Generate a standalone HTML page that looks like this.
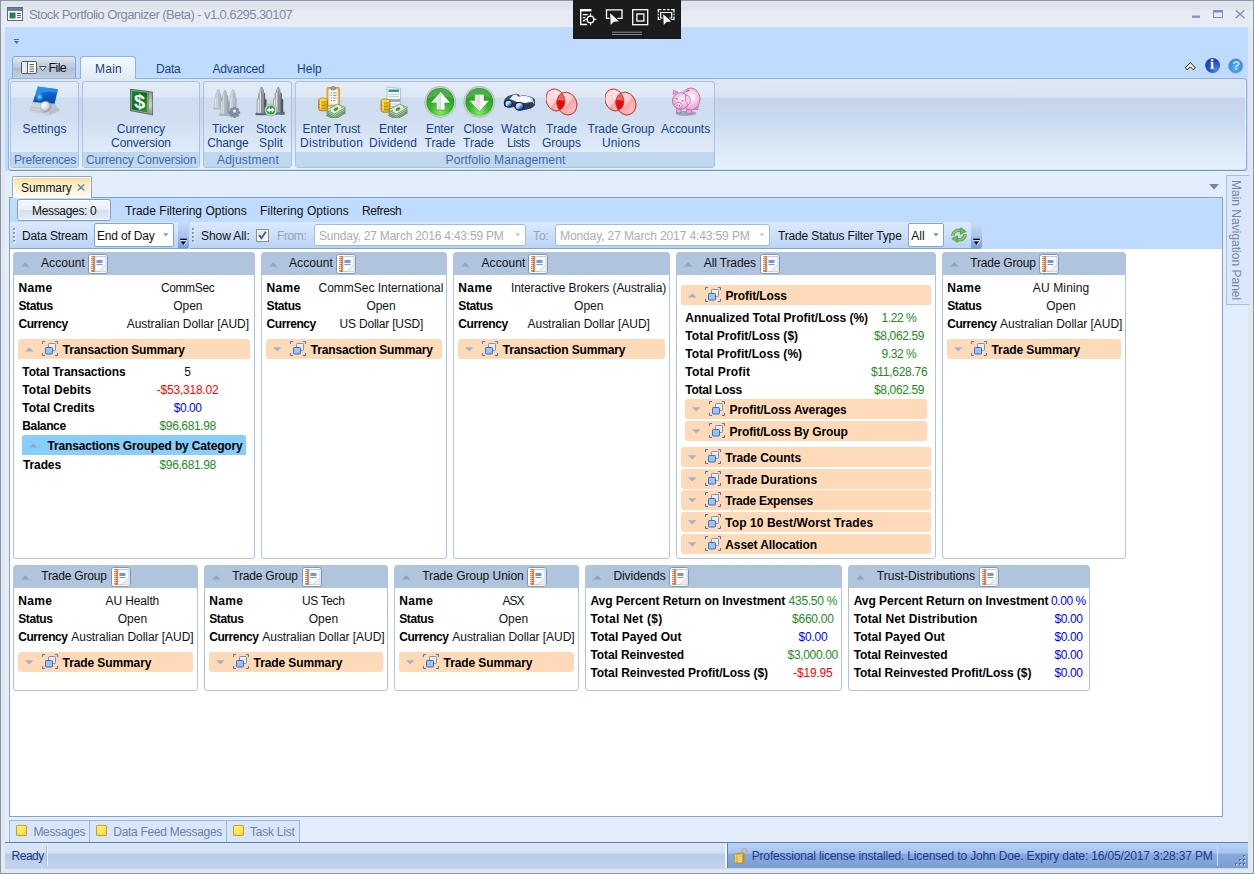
<!DOCTYPE html>
<html><head><meta charset="utf-8"><title>Stock Portfolio Organizer (Beta)</title>
<style>
html,body{margin:0;padding:0}
body{width:1254px;height:874px;overflow:hidden;position:relative;background:#e3edfb;font-family:'Liberation Sans',sans-serif;font-size:12px;line-height:16px}
div,svg,span{position:absolute;box-sizing:border-box}
span{white-space:pre;height:16px}
</style></head><body>
<div style="left:0px;top:0px;width:1254px;height:874px;background:linear-gradient(#dfe3ec 0,#e1e5ed 9px,#e8ebf3 10px,#e8ebf3 27px,#e3e7ef 28px);border:1px solid #8a97ad;"></div>
<div style="left:5px;top:27px;width:1243px;height:842px;background:#bfdbff;"></div>
<svg style="left:7px;top:7px" width="16" height="14" viewBox="0 0 16 14"><rect x="0.5" y="0.5" width="15" height="13" fill="#fff" stroke="#5a6b84"/><rect x="1" y="1" width="14" height="3" fill="#6d7f9c"/><rect x="2.5" y="5.5" width="6" height="6" fill="#2e7d4f"/><rect x="10" y="6" width="4" height="1" fill="#5a6b84"/><rect x="10" y="8" width="4" height="1" fill="#5a6b84"/><rect x="10" y="10" width="4" height="1" fill="#5a6b84"/></svg>
<div style="left:573px;top:0px;width:108px;height:39px;background:#1b1b1b;"></div>
<svg style="left:573px;top:0px" width="108" height="39" viewBox="0 0 108 39"><g fill="none" stroke="#fff" stroke-width="1.300">
<path d="M7.700 9.500v15h6.300"/><path d="M7 10.200h11.500" stroke-width="2.400"/><path d="M9.800 14.600h4.800M9.800 17.600h2.400M9.800 20.600h2.400" stroke-width="1.200"/><circle cx="17.500" cy="19.400" r="3.300"/><path d="M17.500 13.600v3.200M17.500 22v3.200M11.700 19.400h3.200M20.100 19.400h3.200" stroke-width="1.200"/>
<path d="M36.500 18.400h-3v-8.600h15.500v8.600h-4.500"/>
<rect x="59.700" y="9.700" width="15" height="15"/><rect x="63.900" y="14" width="7" height="7"/>
<path d="M85.300 12.500v-2.800h3M98 9.700h3v2.800M85.300 16.500v3h2.200M101 16.500v3h-2.800" stroke-width="1.200"/><path d="M85.300 13.800v1.500M101 13.800v1.500M90 9.700h2.500M94 9.700h2.500" stroke-width="1.200"/><path d="M89.500 18h-1.800v-5.500h11v5.500h-2.500" stroke-width="1.200"/>
</g>
<path d="M37.200 13.200l.5 11.800 3-3.300 5.300-.4z" fill="#fff"/>
<path d="M90.200 14.200l.5 10.800 2.800-3 4.800-.4z" fill="#fff"/>
<rect x="39" y="31.700" width="30" height="1" fill="#8a8a8a"/><rect x="39" y="34" width="30" height="1" fill="#8a8a8a"/></svg>
<svg style="left:1190px;top:5px" width="60" height="18" viewBox="0 0 60 18"><rect x="2" y="10.500" width="8" height="2.300" fill="#7b93bd"/><rect x="23.500" y="5.500" width="9" height="7" fill="none" stroke="#7b93bd"/><rect x="23" y="5" width="10" height="2.500" fill="#7b93bd"/><path d="M45.800 5.200l8.600 7.800M54.400 5.200l-8.600 7.800" stroke="#7b93bd" stroke-width="1.400"/></svg>
<svg style="left:13px;top:38px" width="8" height="8" viewBox="0 0 8 8"><rect x="1" y="1" width="5" height="1" fill="#4a6a9c"/><path d="M1 3h5l-2.500 3z" fill="#4a6a9c"/></svg>
<div style="left:12px;top:56px;width:64px;height:23px;border:1px solid #8ea7cc;border-bottom:none;border-radius:3px 3px 0 0;background:linear-gradient(#dfe7f1,#b9c6d8 50%,#aebdd2 51%,#c5d2e2);"></div>
<svg style="left:20px;top:60px" width="30" height="15" viewBox="0 0 30 15"><rect x="1.500" y="1.500" width="15" height="12" rx="1.500" fill="#fff" stroke="#5a5a5a"/><rect x="2" y="2" width="5" height="11" fill="#e9e9e9"/><path d="M7.500 1.500v12" stroke="#5a5a5a"/><path d="M9.500 4.500h4.500M9.500 6.800h4.500M9.500 9.100h4.500M9.500 11.400h4.500" stroke="#444" stroke-width=".9"/><path d="M19.500 6.500h6.500l-3.250 4.200z" fill="#fff" stroke="#444" stroke-width="0.9"/></svg>
<div style="left:80px;top:56px;width:56px;height:24px;border:1px solid #8db2e3;border-bottom:none;border-radius:4px 4px 0 0;background:linear-gradient(#f4f9ff,#dfeaf7);"></div>
<svg style="left:1182px;top:56px" width="70" height="20" viewBox="0 0 70 20"><defs><radialGradient id="ig" cx=".7" cy=".75" r=".8"><stop offset="0" stop-color="#4a86ea"/><stop offset=".6" stop-color="#1f4fcb"/><stop offset="1" stop-color="#1a3fb0"/></radialGradient><radialGradient id="hg" cx=".5" cy=".6" r=".6"><stop offset="0" stop-color="#5cb8f7"/><stop offset="1" stop-color="#1f82de"/></radialGradient></defs>
<path d="M3.300 11.800l5-5.300 5 5.300-2 2-3-3-3 3z" fill="#fff3c4" stroke="#222" stroke-width="1" stroke-linejoin="round"/>
<circle cx="30.600" cy="9.500" r="7.400" fill="url(#ig)"/>
<circle cx="53.700" cy="10" r="7.200" fill="url(#hg)" stroke="#9aa3ad" stroke-width=".9"/></svg>
<div style="left:8px;top:78px;width:1239px;height:93px;border:1px solid #8db2e3;border-bottom-color:#7f97b8;border-radius:4px;background:linear-gradient(#dde8f5 0,#d9e5f4 18px,#c5d6ec 19px,#c9daef 40px,#dbe8f8 68px,#e8f2fe 100%);box-shadow:inset 0 -1px 0 #bfe9f5,inset 1px 0 0 #eaf3fd,inset -1px 0 0 #eaf3fd;"></div>
<div style="left:81px;top:78px;width:54px;height:2px;background:#dfe9f6;"></div>
<div style="left:10px;top:81px;width:69px;height:87px;border:1px solid #a9c1e2;border-radius:3px;background:linear-gradient(rgba(255,255,255,.18),rgba(255,255,255,.05));"></div>
<div style="left:11px;top:152px;width:67px;height:15px;background:#c1d7f0;border-radius:0 0 2px 2px;"></div>
<div style="left:82px;top:81px;width:118px;height:87px;border:1px solid #a9c1e2;border-radius:3px;background:linear-gradient(rgba(255,255,255,.18),rgba(255,255,255,.05));"></div>
<div style="left:83px;top:152px;width:116px;height:15px;background:#c1d7f0;border-radius:0 0 2px 2px;"></div>
<div style="left:203px;top:81px;width:89px;height:87px;border:1px solid #a9c1e2;border-radius:3px;background:linear-gradient(rgba(255,255,255,.18),rgba(255,255,255,.05));"></div>
<div style="left:204px;top:152px;width:87px;height:15px;background:#c1d7f0;border-radius:0 0 2px 2px;"></div>
<div style="left:295px;top:81px;width:420px;height:87px;border:1px solid #a9c1e2;border-radius:3px;background:linear-gradient(rgba(255,255,255,.18),rgba(255,255,255,.05));"></div>
<div style="left:296px;top:152px;width:418px;height:15px;background:#c1d7f0;border-radius:0 0 2px 2px;"></div>
<svg style="left:28.5px;top:86px" width="32" height="32" viewBox="0 0 32 32"><defs><linearGradient id="sb" x1="0" y1="0" x2="0.300" y2="1"><stop offset="0" stop-color="#2a8fe6"/><stop offset=".55" stop-color="#0d63c9"/><stop offset="1" stop-color="#0a4aa8"/></linearGradient>
<radialGradient id="sg" cx=".35" cy=".35" r=".7"><stop offset="0" stop-color="#fff"/><stop offset=".6" stop-color="#d5d9e0"/><stop offset="1" stop-color="#8e97a6"/></radialGradient>
<radialGradient id="sc" cx=".5" cy=".5" r=".5"><stop offset="0" stop-color="#7ff0ff"/><stop offset="1" stop-color="#19b4f0" stop-opacity="0"/></radialGradient></defs>
<path d="M3.900 16.100L0.300 25.600 19.500 30 31.200 24.500 25.600 17.800z" fill="#b9c0cc"/><path d="M3.900 16.100L0.300 25.600 19.500 30 21 20z" fill="#cfd5de"/><path d="M2 21l18 4M1.200 23.500l18 4" stroke="#a9b1bf" stroke-width=".7"/>
<path d="M8.900 0.500L29 3.300 25.600 17.800 3.900 16.100z" fill="url(#sb)"/><path d="M5.500 11c6-5 14-6.500 21.500-3.500l2-4.200-20.100-2.800z" fill="#3aa0f0" opacity=".55"/><circle cx="10.500" cy="11" r="4.500" fill="url(#sc)"/>
<circle cx="16.500" cy="20.500" r="5.300" fill="url(#sg)" stroke="#8f98a8" stroke-width=".5"/></svg>
<svg style="left:125px;top:86px" width="32" height="32" viewBox="0 0 32 32"><defs><linearGradient id="cg" x1="0" y1="0" x2="1" y2="1"><stop offset="0" stop-color="#138a2a"/><stop offset=".5" stop-color="#0c6f1f"/><stop offset="1" stop-color="#2ea03a"/></linearGradient><linearGradient id="cs" x1="0" y1="0" x2="0" y2="1"><stop offset="0" stop-color="#8d949a"/><stop offset=".6" stop-color="#cfd3c0"/><stop offset="1" stop-color="#8a8f7a"/></linearGradient></defs>
<path d="M5 2.700L23.500 5 28 5.800V29.500L23.500 28.500 5 25z" fill="#5b6166"/><path d="M23.500 5.500L27.300 6.300V28.700L23.500 28z" fill="url(#cs)"/><path d="M6.300 4.300L22.700 6.300V27L6.300 23.800z" fill="url(#cg)" stroke="#b9d9b9" stroke-width=".6"/>
<text x="14.500" y="22" font-family="Liberation Sans,sans-serif" font-size="20" font-weight="700" fill="#fff" text-anchor="middle" transform="translate(0,-1.500) skewY(8)">$</text></svg>
<svg style="left:212px;top:86px" width="32" height="32" viewBox="0 0 32 32"><defs><clipPath id="tc1530"><path d="M6.25 3.00 L4.92 5.00 L4.92 7.00 L3.78 7.60 L3.78 11.40 L2.64 12.20 L2.64 21.00 L1.50 21.60 L1.50 23.00 L11.00 23.00 L11.00 21.60 L9.86 21.00 L9.86 12.20 L8.72 11.40 L8.72 7.60 L7.58 7.00 L7.58 5.00 L6.25 3.00z"/></clipPath></defs><g clip-path="url(#tc1530)"><rect x="1.5" y="3" width="9.5" height="20" fill="#c3ced7"/><rect x="1.5" y="3" width="3.99" height="20" fill="#e3e9ee"/><rect x="7.96" y="3" width="3.04" height="20" fill="#a9b6c1"/><path d="M4.35 8.00V21.00M6.25 5.40V21.00M7.39 8.00V21.00" stroke="#98a6b2" stroke-width=".6" opacity=".7"/><rect x="1.5" y="21.40" width="9.5" height="1.60" fill="#b4c0cb"/></g><path d="M6.25 3.00 L4.92 5.00 L4.92 7.00 L3.78 7.60 L3.78 11.40 L2.64 12.20 L2.64 21.00 L1.50 21.60 L1.50 23.00 L11.00 23.00 L11.00 21.60 L9.86 21.00 L9.86 12.20 L8.72 11.40 L8.72 7.60 L7.58 7.00 L7.58 5.00 L6.25 3.00z" fill="none" stroke="#98a6b2" stroke-width=".5" opacity=".8"/><defs><clipPath id="tc16530"><path d="M21.00 3.00 L19.74 5.10 L19.74 7.20 L18.66 7.83 L18.66 11.82 L17.58 12.66 L17.58 21.90 L16.50 22.53 L16.50 24.00 L25.50 24.00 L25.50 22.53 L24.42 21.90 L24.42 12.66 L23.34 11.82 L23.34 7.83 L22.26 7.20 L22.26 5.10 L21.00 3.00z"/></clipPath></defs><g clip-path="url(#tc16530)"><rect x="16.5" y="3" width="9" height="21" fill="#c3ced7"/><rect x="16.5" y="3" width="3.78" height="21" fill="#e3e9ee"/><rect x="22.62" y="3" width="2.88" height="21" fill="#a9b6c1"/><path d="M19.20 8.25V21.90M21.00 5.52V21.90M22.08 8.25V21.90" stroke="#98a6b2" stroke-width=".6" opacity=".7"/><rect x="16.5" y="22.32" width="9" height="1.68" fill="#b4c0cb"/></g><path d="M21.00 3.00 L19.74 5.10 L19.74 7.20 L18.66 7.83 L18.66 11.82 L17.58 12.66 L17.58 21.90 L16.50 22.53 L16.50 24.00 L25.50 24.00 L25.50 22.53 L24.42 21.90 L24.42 12.66 L23.34 11.82 L23.34 7.83 L22.26 7.20 L22.26 5.10 L21.00 3.00z" fill="none" stroke="#98a6b2" stroke-width=".5" opacity=".8"/><defs><clipPath id="tc7540"><path d="M13.00 4.00 L11.46 6.55 L11.46 9.10 L10.14 9.87 L10.14 14.71 L8.82 15.73 L8.82 26.95 L7.50 27.71 L7.50 29.50 L18.50 29.50 L18.50 27.71 L17.18 26.95 L17.18 15.73 L15.86 14.71 L15.86 9.87 L14.54 9.10 L14.54 6.55 L13.00 4.00z"/></clipPath></defs><g clip-path="url(#tc7540)"><rect x="7.5" y="4" width="11" height="25.5" fill="#b7c4ce"/><rect x="7.5" y="4" width="4.62" height="25.5" fill="#dbe3e9"/><rect x="14.98" y="4" width="3.52" height="25.5" fill="#97a6b3"/><path d="M10.80 10.38V26.95M13.00 7.06V26.95M14.32 10.38V26.95" stroke="#8797a5" stroke-width=".6" opacity=".7"/><rect x="7.5" y="27.46" width="11" height="2.04" fill="#a3b1be"/></g><path d="M13.00 4.00 L11.46 6.55 L11.46 9.10 L10.14 9.87 L10.14 14.71 L8.82 15.73 L8.82 26.95 L7.50 27.71 L7.50 29.50 L18.50 29.50 L18.50 27.71 L17.18 26.95 L17.18 15.73 L15.86 14.71 L15.86 9.87 L14.54 9.10 L14.54 6.55 L13.00 4.00z" fill="none" stroke="#8797a5" stroke-width=".5" opacity=".8"/><g transform="translate(22.500 25)"><path d="M-1-5h2l.4 1.400 1.500.7 1.300-.8 1.400 1.400-.8 1.300.7 1.500 1.400.4v2l-1.400.4-.7 1.500.8 1.300-1.400 1.400-1.300-.8-1.500.7-.4 1.400h-2l-.4-1.400-1.500-.7-1.300.8-1.400-1.400.8-1.300-.7-1.500-1.400-.4v-2l1.400-.4.7-1.500-.8-1.300 1.400-1.400 1.300.8 1.500-.7z" fill="#7f8ea4" stroke="#55647a" stroke-width=".5" transform="scale(.78)"/><circle r="1.500" fill="#f1f4f8"/></g></svg>
<svg style="left:255px;top:86px" width="32" height="32" viewBox="0 0 32 32"><defs><clipPath id="tc710"><path d="M6.70 1.00 L5.02 3.80 L5.02 6.60 L3.58 7.44 L3.58 12.76 L2.14 13.88 L2.14 26.20 L0.70 27.04 L0.70 29.00 L12.70 29.00 L12.70 27.04 L11.26 26.20 L11.26 13.88 L9.82 12.76 L9.82 7.44 L8.38 6.60 L8.38 3.80 L6.70 1.00z"/></clipPath></defs><g clip-path="url(#tc710)"><rect x="0.7" y="1" width="12" height="28" fill="#a9b2b9"/><rect x="0.7" y="1" width="5.04" height="28" fill="#eef1f3"/><rect x="8.86" y="1" width="3.84" height="28" fill="#4f5960"/><path d="M4.30 8.00V26.20M6.70 4.36V26.20M8.14 8.00V26.20" stroke="#3d464d" stroke-width=".6" opacity=".7"/><rect x="0.7" y="26.76" width="12" height="2.24" fill="#5d7183"/></g><path d="M6.70 1.00 L5.02 3.80 L5.02 6.60 L3.58 7.44 L3.58 12.76 L2.14 13.88 L2.14 26.20 L0.70 27.04 L0.70 29.00 L12.70 29.00 L12.70 27.04 L11.26 26.20 L11.26 13.88 L9.82 12.76 L9.82 7.44 L8.38 6.60 L8.38 3.80 L6.70 1.00z" fill="none" stroke="#3d464d" stroke-width=".5" opacity=".8"/><defs><clipPath id="tc17010"><path d="M23.25 1.00 L21.50 3.75 L21.50 6.50 L20.00 7.33 L20.00 12.55 L18.50 13.65 L18.50 25.75 L17.00 26.58 L17.00 28.50 L29.50 28.50 L29.50 26.58 L28.00 25.75 L28.00 13.65 L26.50 12.55 L26.50 7.33 L25.00 6.50 L25.00 3.75 L23.25 1.00z"/></clipPath></defs><g clip-path="url(#tc17010)"><rect x="17" y="1" width="12.5" height="27.5" fill="#a9b2b9"/><rect x="17" y="1" width="5.25" height="27.5" fill="#eef1f3"/><rect x="25.50" y="1" width="4.00" height="27.5" fill="#4f5960"/><path d="M20.75 7.88V25.75M23.25 4.30V25.75M24.75 7.88V25.75" stroke="#3d464d" stroke-width=".6" opacity=".7"/><rect x="17" y="26.30" width="12.5" height="2.20" fill="#5d7183"/></g><path d="M23.25 1.00 L21.50 3.75 L21.50 6.50 L20.00 7.33 L20.00 12.55 L18.50 13.65 L18.50 25.75 L17.00 26.58 L17.00 28.50 L29.50 28.50 L29.50 26.58 L28.00 25.75 L28.00 13.65 L26.50 12.55 L26.50 7.33 L25.00 6.50 L25.00 3.75 L23.25 1.00z" fill="none" stroke="#3d464d" stroke-width=".5" opacity=".8"/><circle cx="15.800" cy="24" r="6" fill="#dfe2e4" stroke="#9a9fa3" stroke-width=".8"/><circle cx="15.800" cy="24" r="4.600" fill="#2fa52a"/><path d="M11.800 24l3-2.800v1.800h2v-1.800l3 2.800-3 2.800v-1.800h-2v1.800z" fill="#fff"/></svg>
<svg style="left:315.5px;top:86px" width="32" height="32" viewBox="0 0 32 32"><rect x="11" y="1.500" width="12.500" height="18.500" rx="1.200" fill="#f0b13a" stroke="#c98a1c" stroke-width=".7"/><rect x="12.800" y="3.500" width="9" height="15" fill="#f6f7f5" stroke="#d7d9d6" stroke-width=".4"/><path d="M15 3.800v-2.300l1.200-1.200h2l1.200 1.200v2.300z" fill="#9aa1a8" stroke="#6f767d" stroke-width=".5"/><path d="M14.500 7h1.500M17 7h3.500M14.500 9.500h1.500M17 9.500h3.500M14.500 12h1.500M17 12h3.500M14.500 14.500h1.500M17 14.500h2.500" stroke="#7f868e" stroke-width=".8"/><g stroke="#96690a" stroke-width=".6"><path d="M2.5 14v9a4.500 2 0 0 0 9 0v-9z" fill="#eab414"/><ellipse cx="7.0" cy="14" rx="4.500" ry="2" fill="#ffdb3a"/></g><path d="M2.5 17.42a4.500 2 0 0 0 9 0M2.5 20.48a4.500 2 0 0 0 9 0" fill="none" stroke="#96690a" stroke-width=".6"/><path d="M4.7 14v9" stroke="#fbe58c" stroke-width="1.500" opacity=".8"/><path d="M10.5 29.5L21.5 23.5L29.5 27.0L18.5 33.5z" fill="#86ad80" stroke="#42703c" stroke-width=".6"/><path d="M10.5 27.7L21.5 21.7L29.5 25.2L18.5 31.7z" fill="#a2c79c" stroke="#42703c" stroke-width=".6"/><path d="M10.5 25.9L21.5 19.9L29.5 23.4L18.5 29.9z" fill="#bcdcb6" stroke="#42703c" stroke-width=".6"/><path d="M10.5 24.1L21.5 18.1L29.5 21.6L18.5 28.1z" fill="#d9eed4" stroke="#42703c" stroke-width=".6"/><ellipse cx="20.0" cy="23.1" rx="2.500" ry="1.600" fill="#4f8a46" transform="rotate(-25 20.0 23.1)"/><path d="M13.5 24.3l1.500.800M25.0 20.6l1.500.800" stroke="#4f8a46" stroke-width=".9"/></svg>
<svg style="left:377px;top:86px" width="32" height="32" viewBox="0 0 32 32"><path d="M10 1l13.500 1.500v18h-13.500z" fill="#eef4f8" stroke="#9fb4c4" stroke-width=".7"/><rect x="11.500" y="3.500" width="10.500" height="2.500" fill="#2f9a8a"/><path d="M11.500 8.500h10.500M11.500 10.500h10.500" stroke="#b9c7d2" stroke-width=".8"/><path d="M12 13v3M14 13v3M16 13v3M18 13v3M20 13v3M22 13v3" stroke="#5c6f80" stroke-width="1.100"/><path d="M11.500 18h10.500" stroke="#b9c7d2" stroke-width=".8"/><g stroke="#96690a" stroke-width=".6"><path d="M4 15v9.5a4.500 2 0 0 0 9 0v-9.5z" fill="#eab414"/><ellipse cx="8.5" cy="15" rx="4.500" ry="2" fill="#ffdb3a"/></g><path d="M4 18.61a4.500 2 0 0 0 9 0M4 21.84a4.500 2 0 0 0 9 0" fill="none" stroke="#96690a" stroke-width=".6"/><path d="M6.2 15v9.5" stroke="#fbe58c" stroke-width="1.500" opacity=".8"/><path d="M11.5 29.5L22.5 23.5L30.5 27.0L19.5 33.5z" fill="#86ad80" stroke="#42703c" stroke-width=".6"/><path d="M11.5 27.7L22.5 21.7L30.5 25.2L19.5 31.7z" fill="#a2c79c" stroke="#42703c" stroke-width=".6"/><path d="M11.5 25.9L22.5 19.9L30.5 23.4L19.5 29.9z" fill="#bcdcb6" stroke="#42703c" stroke-width=".6"/><path d="M11.5 24.1L22.5 18.1L30.5 21.6L19.5 28.1z" fill="#d9eed4" stroke="#42703c" stroke-width=".6"/><ellipse cx="21.0" cy="23.1" rx="2.500" ry="1.600" fill="#4f8a46" transform="rotate(-25 21.0 23.1)"/><path d="M14.5 24.3l1.500.800M26.0 20.6l1.500.800" stroke="#4f8a46" stroke-width=".9"/></svg>
<svg style="left:424px;top:86px" width="32" height="32" viewBox="0 0 32 32"><defs><radialGradient id="bg1" cx=".5" cy=".85" r=".75"><stop offset="0" stop-color="#8aea62"/><stop offset=".45" stop-color="#3aba2b"/><stop offset="1" stop-color="#1f9a1c"/></radialGradient><linearGradient id="ba1" x1="0" y1="0" x2="1" y2="0"><stop offset="0" stop-color="#fff"/><stop offset=".5" stop-color="#d9dddc"/><stop offset=".55" stop-color="#f4f6f5"/><stop offset="1" stop-color="#fff"/></linearGradient></defs>
<circle cx="16.300" cy="15.900" r="15.600" fill="#c9cfd0" stroke="#aab1b3" stroke-width=".6"/><circle cx="16.300" cy="15.900" r="13.900" fill="url(#bg1)"/><path d="M3.500 13a13 13 0 0 1 25.600 0c-5-4.500-20-4.500-25.600 0z" fill="#fff" opacity=".18"/><path d="M16.500 5.400l10 11.500h-5.600v7.100h-8.600v-7.100h-5.600z" fill="url(#ba1)" stroke="#2c8a2a" stroke-width=".5"/></svg>
<svg style="left:462.5px;top:86px" width="32" height="32" viewBox="0 0 32 32"><defs><radialGradient id="bg0" cx=".5" cy=".85" r=".75"><stop offset="0" stop-color="#8aea62"/><stop offset=".45" stop-color="#3aba2b"/><stop offset="1" stop-color="#1f9a1c"/></radialGradient><linearGradient id="ba0" x1="0" y1="0" x2="1" y2="0"><stop offset="0" stop-color="#fff"/><stop offset=".5" stop-color="#d9dddc"/><stop offset=".55" stop-color="#f4f6f5"/><stop offset="1" stop-color="#fff"/></linearGradient></defs>
<circle cx="16.300" cy="15.900" r="15.600" fill="#c9cfd0" stroke="#aab1b3" stroke-width=".6"/><circle cx="16.300" cy="15.900" r="13.900" fill="url(#bg0)"/><path d="M3.500 13a13 13 0 0 1 25.600 0c-5-4.500-20-4.500-25.600 0z" fill="#fff" opacity=".18"/><path d="M16.400 26l-10.200-11.600h5.400v-6.200h9.400v6.200h5.400z" fill="url(#ba0)" stroke="#2c8a2a" stroke-width=".5"/></svg>
<svg style="left:502.5px;top:86px" width="32" height="32" viewBox="0 0 32 32"><defs><linearGradient id="ln" x1="0" y1="0" x2="1" y2="1"><stop offset="0" stop-color="#f4faff"/><stop offset=".45" stop-color="#a9d8fb"/><stop offset=".7" stop-color="#2f74e6"/><stop offset="1" stop-color="#1a3fb8"/></linearGradient><linearGradient id="bb" x1="0" y1="0" x2="0" y2="1"><stop offset="0" stop-color="#3f587c"/><stop offset="1" stop-color="#22344f"/></linearGradient></defs>
<path d="M0.800 17C0.800 13 4 10 8 9L12.500 7.800C14.500 7.600 16 8.500 17 10L20.500 9 27 10.500C31 11.500 33 14 32.500 17.500 32 20.500 29.500 22 26.500 22.800L19 24.600C15 25.200 12 23.200 11.500 20.700L9.500 21.200C5 22.700 0.800 20.500 0.800 17z" fill="url(#bb)"/>
<path d="M6.500 13L10 9.300 13 8.300 15.500 10.800 20.500 9.600 27 11 29.300 15.800 22 17 14 16 9.500 14z" fill="#eef1f4"/><path d="M14.500 12.500L21 11l6 1.500 1.500 3-6.500 1z" fill="#fff"/><path d="M27 10.800l2.200.9 2.300 6.300-2.200-2z" fill="#d5dbe2"/>
<path d="M22.500 17.500l1.500 6M26 16.800l1.500 5.500" stroke="#1f2f48" stroke-width="1" opacity=".6"/>
<ellipse cx="5.300" cy="17.800" rx="4.200" ry="3.800" fill="#0d1422"/><ellipse cx="5.600" cy="17.700" rx="3.200" ry="2.900" fill="url(#ln)"/>
<ellipse cx="16.100" cy="20.300" rx="4.700" ry="4.200" fill="#0d1422"/><ellipse cx="16.400" cy="20.200" rx="3.600" ry="3.200" fill="url(#ln)"/></svg>
<svg style="left:545.5px;top:86px" width="32" height="32" viewBox="0 0 32 32"><defs><linearGradient id="vp1" x1="0.250" y1="0" x2=".75" y2="1"><stop offset="0" stop-color="#fdeaea"/><stop offset=".52" stop-color="#fbcaca"/><stop offset=".55" stop-color="#f7a6a6"/><stop offset="1" stop-color="#fbc4c4"/></linearGradient><clipPath id="vc1"><ellipse cx="9.400" cy="14" rx="9.300" ry="11.200" transform="rotate(-22 9.400 14)"/></clipPath></defs>
<ellipse cx="9.400" cy="14" rx="9.300" ry="11.200" transform="rotate(-22 9.400 14)" fill="url(#vp1)" stroke="#cf3a3a" stroke-width=".7"/>
<ellipse cx="20.900" cy="17.600" rx="9.800" ry="11.600" transform="rotate(-22 20.900 17.600)" fill="url(#vp1)" stroke="#cf3a3a" stroke-width=".7"/>
<g clip-path="url(#vc1)"><ellipse cx="20.900" cy="17.600" rx="9.800" ry="11.600" transform="rotate(-22 20.900 17.600)" fill="#e00b0b"/><path d="M8 2h16v13.200l-16-1.500z" fill="#fff" opacity=".36"/></g>
<ellipse cx="9.400" cy="14" rx="9.300" ry="11.200" transform="rotate(-22 9.400 14)" fill="none" stroke="#cf3a3a" stroke-width=".7"/><ellipse cx="20.900" cy="17.600" rx="9.800" ry="11.600" transform="rotate(-22 20.900 17.600)" fill="none" stroke="#cf3a3a" stroke-width=".7"/></svg>
<svg style="left:605px;top:86px" width="32" height="32" viewBox="0 0 32 32"><defs><linearGradient id="vp2" x1="0.250" y1="0" x2=".75" y2="1"><stop offset="0" stop-color="#fdeaea"/><stop offset=".52" stop-color="#fbcaca"/><stop offset=".55" stop-color="#f7a6a6"/><stop offset="1" stop-color="#fbc4c4"/></linearGradient><clipPath id="vc2"><ellipse cx="9.400" cy="14" rx="9.300" ry="11.200" transform="rotate(-22 9.400 14)"/></clipPath></defs>
<ellipse cx="9.400" cy="14" rx="9.300" ry="11.200" transform="rotate(-22 9.400 14)" fill="url(#vp2)" stroke="#cf3a3a" stroke-width=".7"/>
<ellipse cx="20.900" cy="17.600" rx="9.800" ry="11.600" transform="rotate(-22 20.900 17.600)" fill="url(#vp2)" stroke="#cf3a3a" stroke-width=".7"/>
<g clip-path="url(#vc2)"><ellipse cx="20.900" cy="17.600" rx="9.800" ry="11.600" transform="rotate(-22 20.900 17.600)" fill="#e00b0b"/><path d="M8 2h16v13.200l-16-1.500z" fill="#fff" opacity=".36"/></g>
<ellipse cx="9.400" cy="14" rx="9.300" ry="11.200" transform="rotate(-22 9.400 14)" fill="none" stroke="#cf3a3a" stroke-width=".7"/><ellipse cx="20.900" cy="17.600" rx="9.800" ry="11.600" transform="rotate(-22 20.900 17.600)" fill="none" stroke="#cf3a3a" stroke-width=".7"/></svg>
<svg style="left:669.5px;top:86px" width="32" height="32" viewBox="0 0 32 32"><defs><radialGradient id="pg" cx=".55" cy=".4" r=".65"><stop offset="0" stop-color="#fff"/><stop offset=".45" stop-color="#f3cde9"/><stop offset="1" stop-color="#dd9bcd"/></radialGradient></defs>
<ellipse cx="16" cy="27.300" rx="10.500" ry="2.600" fill="#6f8088" opacity=".55"/>
<path d="M6.500 21.500h4.500v5.200h-4.500zM16.500 22h5v5.500h-5zM23.500 18h4.500v5.500h-4.500z" fill="#e6a6d6" stroke="#c060a8" stroke-width=".7"/>
<ellipse cx="20.700" cy="13" rx="9.300" ry="11" fill="url(#pg)" stroke="#c060a8" stroke-width=".8"/>
<path d="M3 8.500l.5-4 4.500 1.500z" fill="#eab5dc" stroke="#c060a8" stroke-width=".7"/>
<circle cx="10.700" cy="15" r="8.300" fill="url(#pg)" stroke="#c060a8" stroke-width=".8"/>
<path d="M15.500 9.500c2.500-.5 4.500 1 4.800 4 .2 2-.5 4-1.800 5-1.500-1-2.500-2.500-3-4.500z" fill="#f6d6ee" stroke="#c060a8" stroke-width=".7"/>
<ellipse cx="8.400" cy="19.200" rx="3.700" ry="2.900" fill="#f8dff2" stroke="#c060a8" stroke-width=".7"/><ellipse cx="7.100" cy="19.200" rx=".55" ry=".9" fill="#a0408c"/><ellipse cx="9.400" cy="19.700" rx=".55" ry=".9" fill="#a0408c"/>
<path d="M5.800 12.500l2 .8M11.500 14.300l2 .8" stroke="#b050a0" stroke-width="1.100"/><path d="M16.300 5.500l3-1.500" stroke="#b050a0" stroke-width="1.300"/></svg>
<div style="left:5px;top:171px;width:1243px;height:649px;background:#e3eefd;"></div>
<div style="left:9px;top:197px;width:1214px;height:620px;border:1px solid #86a2cc;background:#fff;"></div>
<div style="left:12px;top:176px;width:80px;height:22px;border:1px solid #8fa6c8;box-shadow:inset 1px 1px 0 #fff,inset -1px 0 0 #fff;border-bottom:none;border-radius:2px 2px 0 0;background:linear-gradient(#fbdc98,#fdeec9 40%,#fffdf6);"></div>
<svg style="left:76px;top:183px" width="10" height="9" viewBox="0 0 10 9"><path d="M1.800 1.500l6.500 6M8.300 1.500l-6.500 6" stroke="#6d84ab" stroke-width="1.600"/></svg>
<svg style="left:1208px;top:183px" width="12" height="8" viewBox="0 0 12 8"><path d="M1 1h10l-5 5.500z" fill="#6c86ac"/></svg>
<div style="left:1226px;top:175px;width:23px;height:130px;border:1px solid #a6bedf;border-right:none;background:#dce8f9;"></div>
<div style="left:10px;top:198px;width:1212px;height:24px;background:#bfdbff;"></div>
<div style="left:17px;top:199px;width:94px;height:22px;border:1px solid #7f9cc6;border-radius:3px;box-shadow:inset 0 0 0 1px #fff;background:linear-gradient(#f2f6fd,#e9f0fb 50%,#d3dfee 51%,#e5edf8);"></div>
<div style="left:10px;top:222px;width:1212px;height:27px;background:#bfdbff;"></div>
<div style="left:10px;top:222px;width:168px;height:27px;background:linear-gradient(#dbe9fd 0,#cfe1fb 40%,#c3d9f8 75%,#bbd3f5 100%);border-bottom:1px solid #7da5de;"></div>
<div style="left:178px;top:222px;width:11px;height:27px;background:linear-gradient(#c9dcf8,#a9c4ee 50%,#6f9be0);border-radius:0 3px 3px 0;"></div>
<div style="left:190px;top:222px;width:781px;height:27px;background:linear-gradient(#dbe9fd 0,#cfe1fb 40%,#c3d9f8 75%,#bbd3f5 100%);border-bottom:1px solid #7da5de;"></div>
<div style="left:971px;top:222px;width:11px;height:27px;background:linear-gradient(#c9dcf8,#a9c4ee 50%,#6f9be0);border-radius:0 3px 3px 0;"></div>
<svg style="left:13px;top:228px" width="4" height="16" viewBox="0 0 4 16"><rect x="0" y="0" width="2" height="2" fill="#6f95d3"/><rect x="1" y="1" width="2" height="2" fill="#f4f8fe"/><rect x="1" y="1" width="1" height="1" fill="#9dbbe8"/><rect x="0" y="4" width="2" height="2" fill="#6f95d3"/><rect x="1" y="5" width="2" height="2" fill="#f4f8fe"/><rect x="1" y="5" width="1" height="1" fill="#9dbbe8"/><rect x="0" y="8" width="2" height="2" fill="#6f95d3"/><rect x="1" y="9" width="2" height="2" fill="#f4f8fe"/><rect x="1" y="9" width="1" height="1" fill="#9dbbe8"/><rect x="0" y="12" width="2" height="2" fill="#6f95d3"/><rect x="1" y="13" width="2" height="2" fill="#f4f8fe"/><rect x="1" y="13" width="1" height="1" fill="#9dbbe8"/></svg>
<svg style="left:192px;top:228px" width="4" height="16" viewBox="0 0 4 16"><rect x="0" y="0" width="2" height="2" fill="#6f95d3"/><rect x="1" y="1" width="2" height="2" fill="#f4f8fe"/><rect x="1" y="1" width="1" height="1" fill="#9dbbe8"/><rect x="0" y="4" width="2" height="2" fill="#6f95d3"/><rect x="1" y="5" width="2" height="2" fill="#f4f8fe"/><rect x="1" y="5" width="1" height="1" fill="#9dbbe8"/><rect x="0" y="8" width="2" height="2" fill="#6f95d3"/><rect x="1" y="9" width="2" height="2" fill="#f4f8fe"/><rect x="1" y="9" width="1" height="1" fill="#9dbbe8"/><rect x="0" y="12" width="2" height="2" fill="#6f95d3"/><rect x="1" y="13" width="2" height="2" fill="#f4f8fe"/><rect x="1" y="13" width="1" height="1" fill="#9dbbe8"/></svg>
<svg style="left:180px;top:238px" width="8" height="8" viewBox="0 0 8 8"><rect x="0.300" y="0.700" width="6.400" height="1.500" fill="#000"/><rect x="0.300" y="2.200" width="6.400" height="1" fill="#fff" opacity=".9"/><path d="M0.800 3.600h5.400l-2.700 3.400z" fill="#000"/><path d="M6.200 3.600l-2.700 3.400.6.500 2.900-3.700z" fill="#fff" opacity=".8"/></svg>
<svg style="left:973px;top:238px" width="8" height="8" viewBox="0 0 8 8"><rect x="0.300" y="0.700" width="6.400" height="1.500" fill="#000"/><rect x="0.300" y="2.200" width="6.400" height="1" fill="#fff" opacity=".9"/><path d="M0.800 3.600h5.400l-2.700 3.400z" fill="#000"/><path d="M6.200 3.600l-2.700 3.400.6.500 2.900-3.700z" fill="#fff" opacity=".8"/></svg>
<div style="left:94px;top:223px;width:80px;height:24px;border:1px solid #7ea4dd;border-radius:2px;background:#fff;"></div>
<svg style="left:163px;top:233px" width="6" height="4" viewBox="0 0 6 4"><path d="M0.300 0.200h5l-2.500 3.200z" fill="#7b96c0"/></svg>
<div style="left:256px;top:229px;width:13px;height:13px;border:1px solid #8e8f8f;background:linear-gradient(135deg,#d9dde3,#fff);box-shadow:inset 0 0 0 1px #f4f4f4;"></div>
<svg style="left:257px;top:230px" width="11" height="11" viewBox="0 0 11 11"><path d="M2.200 5.200l2.300 3 4.300-6.500" fill="none" stroke="#4a5f97" stroke-width="1.900"/></svg>
<div style="left:314px;top:224px;width:212px;height:22px;border:1px solid #9cbbe6;border-radius:3px;background:#fff;"></div>
<svg style="left:515px;top:233px" width="6" height="4" viewBox="0 0 6 4"><path d="M0.300 0.200h5l-2.500 3.200z" fill="#c3cad6"/></svg>
<div style="left:555px;top:224px;width:215px;height:22px;border:1px solid #9cbbe6;border-radius:3px;background:#fff;"></div>
<svg style="left:759px;top:233px" width="6" height="4" viewBox="0 0 6 4"><path d="M0.300 0.200h5l-2.500 3.200z" fill="#c3cad6"/></svg>
<div style="left:908px;top:223px;width:36px;height:24px;border:1px solid #7ea4dd;border-radius:2px;background:#fff;"></div>
<svg style="left:933px;top:233px" width="6" height="4" viewBox="0 0 6 4"><path d="M0.300 0.200h5.400l-2.700 3.200z" fill="#6f8fc4"/></svg>
<svg style="left:950px;top:226px" width="18" height="18" viewBox="0 0 18 18"><g fill="none" stroke-linecap="butt"><path d="M2.800 10C3 5.500 7 3.300 11.500 4.800" stroke="#4e9a36" stroke-width="3.400"/><path d="M2.800 10C3 5.500 7 3.300 11.500 4.800" stroke="#86cc66" stroke-width="1.900"/><path d="M15.200 8.200C15 12.700 11 14.900 6.500 13.400" stroke="#4e9a36" stroke-width="3.400"/><path d="M15.200 8.200C15 12.700 11 14.900 6.500 13.400" stroke="#86cc66" stroke-width="1.900"/></g><path d="M10.800 1.600l5.400 4-5.900 2.800z" fill="#6fbd4e" stroke="#4e9a36" stroke-width=".7"/><path d="M7.200 16.600l-5.400-4 5.900-2.800z" fill="#6fbd4e" stroke="#4e9a36" stroke-width=".7"/></svg>
<div style="left:13px;top:252px;width:242px;height:307px;border:1px solid #afc3e0;border-radius:4px 4px 3px 3px;background:#fff;"></div>
<div style="left:13px;top:252px;width:242px;height:23px;background:#b0c4de;border-radius:4px 4px 0 0;"></div>
<svg style="left:20.5px;top:261.5px" width="9" height="5" viewBox="0 0 9 5"><path d="M0 4.500l4.250-4.300 4.250 4.300z" fill="#8fa3c4"/></svg>
<svg style="left:88px;top:254px" width="20" height="20" viewBox="0 0 20 20"><rect x="0.5" y="0.5" width="19" height="19" rx="2.200" fill="#fff" stroke="#7a97c4"/><rect x="7" y="2.500" width="11" height="15" fill="#fdfdfe" stroke="#c3c9d2" stroke-width="1"/><rect x="3" y="2" width="3.500" height="16" rx="1" fill="#dc8c52"/><rect x="5" y="2" width="1.500" height="16" fill="#c9652c"/><path d="M2.500 3.500h3M2.500 5.500h3M2.500 7.500h3M2.500 9.500h3M2.500 11.500h3M2.500 13.500h3M2.500 15.500h3" stroke="#f6e9e0" stroke-width="1"/><rect x="8.500" y="6" width="6" height="3" fill="#6f97e0"/><rect x="8.500" y="10" width="6" height="1" fill="#6f97e0"/><path d="M11 17.500l6.500-6.500v6.500z" fill="#eceef2"/><path d="M11 17.500l6.500-6.500" stroke="#c9cdd4" stroke-width="1"/></svg>
<div style="left:18px;top:339px;width:232px;height:20px;background:#ffdab9;border-radius:3px 3px 0 0;"></div>
<svg style="left:24.5px;top:346.7px" width="9" height="5" viewBox="0 0 9 5"><path d="M0 4.500l4.250-4.300 4.250 4.300z" fill="#a3b2c8"/></svg>
<svg style="left:42px;top:341px" width="16" height="16" viewBox="0 0 16 16"><path d="M0.500 3v-2.500h2.500M13 0.500h2.500v2.500M0.500 12v2.500h2.500M15.500 12v2.500h-2.500" fill="none" stroke="#3560ae" stroke-width="1" opacity=".85"/><rect x="6.500" y="2.500" width="7" height="7" rx="0.800" fill="#e9eef6" stroke="#8a8f98" stroke-width="1"/><rect x="3.500" y="6.500" width="7" height="6.500" rx="0.800" fill="#9cc4f3" stroke="#3a6cc0" stroke-width="1"/></svg>
<div style="left:22px;top:435px;width:224px;height:20px;background:#87cefa;border-radius:3px 3px 0 0;"></div>
<svg style="left:28.5px;top:442.7px" width="9" height="5" viewBox="0 0 9 5"><path d="M0 4.500l4.250-4.300 4.250 4.300z" fill="#94a6c8"/></svg>
<div style="left:261px;top:252px;width:186px;height:307px;border:1px solid #afc3e0;border-radius:4px 4px 3px 3px;background:#fff;"></div>
<div style="left:261px;top:252px;width:186px;height:23px;background:#b0c4de;border-radius:4px 4px 0 0;"></div>
<svg style="left:268.5px;top:261.5px" width="9" height="5" viewBox="0 0 9 5"><path d="M0 4.500l4.250-4.300 4.250 4.300z" fill="#8fa3c4"/></svg>
<svg style="left:336px;top:254px" width="20" height="20" viewBox="0 0 20 20"><rect x="0.5" y="0.5" width="19" height="19" rx="2.200" fill="#fff" stroke="#7a97c4"/><rect x="7" y="2.500" width="11" height="15" fill="#fdfdfe" stroke="#c3c9d2" stroke-width="1"/><rect x="3" y="2" width="3.500" height="16" rx="1" fill="#dc8c52"/><rect x="5" y="2" width="1.500" height="16" fill="#c9652c"/><path d="M2.500 3.500h3M2.500 5.500h3M2.500 7.500h3M2.500 9.500h3M2.500 11.500h3M2.500 13.500h3M2.500 15.500h3" stroke="#f6e9e0" stroke-width="1"/><rect x="8.500" y="6" width="6" height="3" fill="#6f97e0"/><rect x="8.500" y="10" width="6" height="1" fill="#6f97e0"/><path d="M11 17.500l6.500-6.500v6.500z" fill="#eceef2"/><path d="M11 17.500l6.500-6.500" stroke="#c9cdd4" stroke-width="1"/></svg>
<div style="left:266px;top:339px;width:176px;height:20px;background:#ffdab9;border-radius:3px;"></div>
<svg style="left:272.5px;top:347px" width="9" height="5" viewBox="0 0 9 5"><path d="M0 0.300h8.500l-4.250 4.300z" fill="#a3b2c8"/></svg>
<svg style="left:290px;top:341px" width="16" height="16" viewBox="0 0 16 16"><path d="M0.500 3v-2.500h2.500M13 0.500h2.500v2.500M0.500 12v2.500h2.500M15.500 12v2.500h-2.500" fill="none" stroke="#3560ae" stroke-width="1" opacity=".85"/><rect x="6.500" y="2.500" width="7" height="7" rx="0.800" fill="#e9eef6" stroke="#8a8f98" stroke-width="1"/><rect x="3.500" y="6.500" width="7" height="6.500" rx="0.800" fill="#9cc4f3" stroke="#3a6cc0" stroke-width="1"/></svg>
<div style="left:453px;top:252px;width:217px;height:307px;border:1px solid #afc3e0;border-radius:4px 4px 3px 3px;background:#fff;"></div>
<div style="left:453px;top:252px;width:217px;height:23px;background:#b0c4de;border-radius:4px 4px 0 0;"></div>
<svg style="left:460.5px;top:261.5px" width="9" height="5" viewBox="0 0 9 5"><path d="M0 4.500l4.250-4.300 4.250 4.300z" fill="#8fa3c4"/></svg>
<svg style="left:528px;top:254px" width="20" height="20" viewBox="0 0 20 20"><rect x="0.5" y="0.5" width="19" height="19" rx="2.200" fill="#fff" stroke="#7a97c4"/><rect x="7" y="2.500" width="11" height="15" fill="#fdfdfe" stroke="#c3c9d2" stroke-width="1"/><rect x="3" y="2" width="3.500" height="16" rx="1" fill="#dc8c52"/><rect x="5" y="2" width="1.500" height="16" fill="#c9652c"/><path d="M2.500 3.500h3M2.500 5.500h3M2.500 7.500h3M2.500 9.500h3M2.500 11.500h3M2.500 13.500h3M2.500 15.500h3" stroke="#f6e9e0" stroke-width="1"/><rect x="8.500" y="6" width="6" height="3" fill="#6f97e0"/><rect x="8.500" y="10" width="6" height="1" fill="#6f97e0"/><path d="M11 17.500l6.500-6.500v6.500z" fill="#eceef2"/><path d="M11 17.500l6.500-6.500" stroke="#c9cdd4" stroke-width="1"/></svg>
<div style="left:458px;top:339px;width:207px;height:20px;background:#ffdab9;border-radius:3px;"></div>
<svg style="left:464.5px;top:347px" width="9" height="5" viewBox="0 0 9 5"><path d="M0 0.300h8.500l-4.250 4.300z" fill="#a3b2c8"/></svg>
<svg style="left:482px;top:341px" width="16" height="16" viewBox="0 0 16 16"><path d="M0.500 3v-2.500h2.500M13 0.500h2.500v2.500M0.500 12v2.500h2.500M15.500 12v2.500h-2.500" fill="none" stroke="#3560ae" stroke-width="1" opacity=".85"/><rect x="6.500" y="2.500" width="7" height="7" rx="0.800" fill="#e9eef6" stroke="#8a8f98" stroke-width="1"/><rect x="3.500" y="6.500" width="7" height="6.500" rx="0.800" fill="#9cc4f3" stroke="#3a6cc0" stroke-width="1"/></svg>
<div style="left:676px;top:252px;width:260px;height:307px;border:1px solid #afc3e0;border-radius:4px 4px 3px 3px;background:#fff;"></div>
<div style="left:676px;top:252px;width:260px;height:23px;background:#b0c4de;border-radius:4px 4px 0 0;"></div>
<svg style="left:683.5px;top:261.5px" width="9" height="5" viewBox="0 0 9 5"><path d="M0 4.500l4.250-4.300 4.250 4.300z" fill="#8fa3c4"/></svg>
<svg style="left:760px;top:254px" width="20" height="20" viewBox="0 0 20 20"><rect x="0.5" y="0.5" width="19" height="19" rx="2.200" fill="#fff" stroke="#7a97c4"/><rect x="7" y="2.500" width="11" height="15" fill="#fdfdfe" stroke="#c3c9d2" stroke-width="1"/><rect x="3" y="2" width="3.500" height="16" rx="1" fill="#dc8c52"/><rect x="5" y="2" width="1.500" height="16" fill="#c9652c"/><path d="M2.500 3.500h3M2.500 5.500h3M2.500 7.500h3M2.500 9.500h3M2.500 11.500h3M2.500 13.500h3M2.500 15.500h3" stroke="#f6e9e0" stroke-width="1"/><rect x="8.500" y="6" width="6" height="3" fill="#6f97e0"/><rect x="8.500" y="10" width="6" height="1" fill="#6f97e0"/><path d="M11 17.500l6.500-6.500v6.500z" fill="#eceef2"/><path d="M11 17.500l6.500-6.500" stroke="#c9cdd4" stroke-width="1"/></svg>
<div style="left:681px;top:285px;width:250px;height:20px;background:#ffdab9;border-radius:3px 3px 0 0;"></div>
<svg style="left:687.5px;top:292.7px" width="9" height="5" viewBox="0 0 9 5"><path d="M0 4.500l4.250-4.300 4.250 4.300z" fill="#a3b2c8"/></svg>
<svg style="left:705px;top:287px" width="16" height="16" viewBox="0 0 16 16"><path d="M0.500 3v-2.500h2.500M13 0.500h2.500v2.500M0.500 12v2.500h2.500M15.500 12v2.500h-2.500" fill="none" stroke="#3560ae" stroke-width="1" opacity=".85"/><rect x="6.500" y="2.500" width="7" height="7" rx="0.800" fill="#e9eef6" stroke="#8a8f98" stroke-width="1"/><rect x="3.500" y="6.500" width="7" height="6.500" rx="0.800" fill="#9cc4f3" stroke="#3a6cc0" stroke-width="1"/></svg>
<div style="left:685px;top:399px;width:242px;height:20px;background:#ffdab9;border-radius:3px;"></div>
<svg style="left:691.5px;top:407px" width="9" height="5" viewBox="0 0 9 5"><path d="M0 0.300h8.500l-4.250 4.300z" fill="#a3b2c8"/></svg>
<svg style="left:709px;top:401px" width="16" height="16" viewBox="0 0 16 16"><path d="M0.500 3v-2.500h2.500M13 0.500h2.500v2.500M0.500 12v2.500h2.500M15.500 12v2.500h-2.500" fill="none" stroke="#3560ae" stroke-width="1" opacity=".85"/><rect x="6.500" y="2.500" width="7" height="7" rx="0.800" fill="#e9eef6" stroke="#8a8f98" stroke-width="1"/><rect x="3.500" y="6.500" width="7" height="6.500" rx="0.800" fill="#9cc4f3" stroke="#3a6cc0" stroke-width="1"/></svg>
<div style="left:685px;top:421px;width:242px;height:20px;background:#ffdab9;border-radius:3px;"></div>
<svg style="left:691.5px;top:429px" width="9" height="5" viewBox="0 0 9 5"><path d="M0 0.300h8.500l-4.250 4.300z" fill="#a3b2c8"/></svg>
<svg style="left:709px;top:423px" width="16" height="16" viewBox="0 0 16 16"><path d="M0.500 3v-2.500h2.500M13 0.500h2.500v2.500M0.500 12v2.500h2.500M15.500 12v2.500h-2.500" fill="none" stroke="#3560ae" stroke-width="1" opacity=".85"/><rect x="6.500" y="2.500" width="7" height="7" rx="0.800" fill="#e9eef6" stroke="#8a8f98" stroke-width="1"/><rect x="3.500" y="6.500" width="7" height="6.500" rx="0.800" fill="#9cc4f3" stroke="#3a6cc0" stroke-width="1"/></svg>
<div style="left:681px;top:447px;width:250px;height:20px;background:#ffdab9;border-radius:3px;"></div>
<svg style="left:687.5px;top:455px" width="9" height="5" viewBox="0 0 9 5"><path d="M0 0.300h8.500l-4.250 4.300z" fill="#a3b2c8"/></svg>
<svg style="left:705px;top:449px" width="16" height="16" viewBox="0 0 16 16"><path d="M0.500 3v-2.500h2.500M13 0.500h2.500v2.500M0.500 12v2.500h2.500M15.500 12v2.500h-2.500" fill="none" stroke="#3560ae" stroke-width="1" opacity=".85"/><rect x="6.500" y="2.500" width="7" height="7" rx="0.800" fill="#e9eef6" stroke="#8a8f98" stroke-width="1"/><rect x="3.500" y="6.500" width="7" height="6.500" rx="0.800" fill="#9cc4f3" stroke="#3a6cc0" stroke-width="1"/></svg>
<div style="left:681px;top:469px;width:250px;height:20px;background:#ffdab9;border-radius:3px;"></div>
<svg style="left:687.5px;top:477px" width="9" height="5" viewBox="0 0 9 5"><path d="M0 0.300h8.500l-4.250 4.300z" fill="#a3b2c8"/></svg>
<svg style="left:705px;top:471px" width="16" height="16" viewBox="0 0 16 16"><path d="M0.500 3v-2.500h2.500M13 0.500h2.500v2.500M0.500 12v2.500h2.500M15.500 12v2.500h-2.500" fill="none" stroke="#3560ae" stroke-width="1" opacity=".85"/><rect x="6.500" y="2.500" width="7" height="7" rx="0.800" fill="#e9eef6" stroke="#8a8f98" stroke-width="1"/><rect x="3.500" y="6.500" width="7" height="6.500" rx="0.800" fill="#9cc4f3" stroke="#3a6cc0" stroke-width="1"/></svg>
<div style="left:681px;top:490px;width:250px;height:20px;background:#ffdab9;border-radius:3px;"></div>
<svg style="left:687.5px;top:498px" width="9" height="5" viewBox="0 0 9 5"><path d="M0 0.300h8.500l-4.250 4.300z" fill="#a3b2c8"/></svg>
<svg style="left:705px;top:492px" width="16" height="16" viewBox="0 0 16 16"><path d="M0.500 3v-2.500h2.500M13 0.500h2.500v2.500M0.500 12v2.500h2.500M15.500 12v2.500h-2.500" fill="none" stroke="#3560ae" stroke-width="1" opacity=".85"/><rect x="6.500" y="2.500" width="7" height="7" rx="0.800" fill="#e9eef6" stroke="#8a8f98" stroke-width="1"/><rect x="3.500" y="6.500" width="7" height="6.500" rx="0.800" fill="#9cc4f3" stroke="#3a6cc0" stroke-width="1"/></svg>
<div style="left:681px;top:512px;width:250px;height:20px;background:#ffdab9;border-radius:3px;"></div>
<svg style="left:687.5px;top:520px" width="9" height="5" viewBox="0 0 9 5"><path d="M0 0.300h8.500l-4.250 4.300z" fill="#a3b2c8"/></svg>
<svg style="left:705px;top:514px" width="16" height="16" viewBox="0 0 16 16"><path d="M0.500 3v-2.500h2.500M13 0.500h2.500v2.500M0.500 12v2.500h2.500M15.500 12v2.500h-2.500" fill="none" stroke="#3560ae" stroke-width="1" opacity=".85"/><rect x="6.500" y="2.500" width="7" height="7" rx="0.800" fill="#e9eef6" stroke="#8a8f98" stroke-width="1"/><rect x="3.500" y="6.500" width="7" height="6.500" rx="0.800" fill="#9cc4f3" stroke="#3a6cc0" stroke-width="1"/></svg>
<div style="left:681px;top:534px;width:250px;height:20px;background:#ffdab9;border-radius:3px;"></div>
<svg style="left:687.5px;top:542px" width="9" height="5" viewBox="0 0 9 5"><path d="M0 0.300h8.500l-4.250 4.300z" fill="#a3b2c8"/></svg>
<svg style="left:705px;top:536px" width="16" height="16" viewBox="0 0 16 16"><path d="M0.500 3v-2.500h2.500M13 0.500h2.500v2.500M0.500 12v2.500h2.500M15.500 12v2.500h-2.500" fill="none" stroke="#3560ae" stroke-width="1" opacity=".85"/><rect x="6.500" y="2.500" width="7" height="7" rx="0.800" fill="#e9eef6" stroke="#8a8f98" stroke-width="1"/><rect x="3.500" y="6.500" width="7" height="6.500" rx="0.800" fill="#9cc4f3" stroke="#3a6cc0" stroke-width="1"/></svg>
<div style="left:942px;top:252px;width:184px;height:307px;border:1px solid #afc3e0;border-radius:4px 4px 3px 3px;background:#fff;"></div>
<div style="left:942px;top:252px;width:184px;height:23px;background:#b0c4de;border-radius:4px 4px 0 0;"></div>
<svg style="left:949.5px;top:261.5px" width="9" height="5" viewBox="0 0 9 5"><path d="M0 4.500l4.250-4.300 4.250 4.300z" fill="#8fa3c4"/></svg>
<svg style="left:1039px;top:254px" width="20" height="20" viewBox="0 0 20 20"><rect x="0.5" y="0.5" width="19" height="19" rx="2.200" fill="#fff" stroke="#7a97c4"/><rect x="7" y="2.500" width="11" height="15" fill="#fdfdfe" stroke="#c3c9d2" stroke-width="1"/><rect x="3" y="2" width="3.500" height="16" rx="1" fill="#dc8c52"/><rect x="5" y="2" width="1.500" height="16" fill="#c9652c"/><path d="M2.500 3.500h3M2.500 5.500h3M2.500 7.500h3M2.500 9.500h3M2.500 11.500h3M2.500 13.500h3M2.500 15.500h3" stroke="#f6e9e0" stroke-width="1"/><rect x="8.500" y="6" width="6" height="3" fill="#6f97e0"/><rect x="8.500" y="10" width="6" height="1" fill="#6f97e0"/><path d="M11 17.500l6.500-6.500v6.500z" fill="#eceef2"/><path d="M11 17.500l6.500-6.500" stroke="#c9cdd4" stroke-width="1"/></svg>
<div style="left:947px;top:339px;width:174px;height:20px;background:#ffdab9;border-radius:3px;"></div>
<svg style="left:953.5px;top:347px" width="9" height="5" viewBox="0 0 9 5"><path d="M0 0.300h8.500l-4.250 4.300z" fill="#a3b2c8"/></svg>
<svg style="left:971px;top:341px" width="16" height="16" viewBox="0 0 16 16"><path d="M0.500 3v-2.500h2.500M13 0.500h2.500v2.500M0.500 12v2.500h2.500M15.500 12v2.500h-2.500" fill="none" stroke="#3560ae" stroke-width="1" opacity=".85"/><rect x="6.500" y="2.500" width="7" height="7" rx="0.800" fill="#e9eef6" stroke="#8a8f98" stroke-width="1"/><rect x="3.500" y="6.500" width="7" height="6.500" rx="0.800" fill="#9cc4f3" stroke="#3a6cc0" stroke-width="1"/></svg>
<div style="left:13px;top:565px;width:185px;height:126px;border:1px solid #afc3e0;border-radius:4px 4px 3px 3px;background:#fff;"></div>
<div style="left:13px;top:565px;width:185px;height:23px;background:#b0c4de;border-radius:4px 4px 0 0;"></div>
<svg style="left:20.5px;top:574.5px" width="9" height="5" viewBox="0 0 9 5"><path d="M0 4.500l4.250-4.300 4.250 4.300z" fill="#8fa3c4"/></svg>
<svg style="left:111px;top:567px" width="20" height="20" viewBox="0 0 20 20"><rect x="0.5" y="0.5" width="19" height="19" rx="2.200" fill="#fff" stroke="#7a97c4"/><rect x="7" y="2.500" width="11" height="15" fill="#fdfdfe" stroke="#c3c9d2" stroke-width="1"/><rect x="3" y="2" width="3.500" height="16" rx="1" fill="#dc8c52"/><rect x="5" y="2" width="1.500" height="16" fill="#c9652c"/><path d="M2.500 3.500h3M2.500 5.500h3M2.500 7.500h3M2.500 9.500h3M2.500 11.500h3M2.500 13.500h3M2.500 15.500h3" stroke="#f6e9e0" stroke-width="1"/><rect x="8.500" y="6" width="6" height="3" fill="#6f97e0"/><rect x="8.500" y="10" width="6" height="1" fill="#6f97e0"/><path d="M11 17.500l6.500-6.500v6.500z" fill="#eceef2"/><path d="M11 17.500l6.500-6.500" stroke="#c9cdd4" stroke-width="1"/></svg>
<div style="left:18px;top:652px;width:175px;height:20px;background:#ffdab9;border-radius:3px;"></div>
<svg style="left:24.5px;top:660px" width="9" height="5" viewBox="0 0 9 5"><path d="M0 0.300h8.500l-4.250 4.300z" fill="#a3b2c8"/></svg>
<svg style="left:42px;top:654px" width="16" height="16" viewBox="0 0 16 16"><path d="M0.500 3v-2.500h2.500M13 0.500h2.500v2.500M0.500 12v2.500h2.500M15.500 12v2.500h-2.500" fill="none" stroke="#3560ae" stroke-width="1" opacity=".85"/><rect x="6.500" y="2.500" width="7" height="7" rx="0.800" fill="#e9eef6" stroke="#8a8f98" stroke-width="1"/><rect x="3.500" y="6.500" width="7" height="6.500" rx="0.800" fill="#9cc4f3" stroke="#3a6cc0" stroke-width="1"/></svg>
<div style="left:204px;top:565px;width:184px;height:126px;border:1px solid #afc3e0;border-radius:4px 4px 3px 3px;background:#fff;"></div>
<div style="left:204px;top:565px;width:184px;height:23px;background:#b0c4de;border-radius:4px 4px 0 0;"></div>
<svg style="left:211.5px;top:574.5px" width="9" height="5" viewBox="0 0 9 5"><path d="M0 4.500l4.250-4.300 4.250 4.300z" fill="#8fa3c4"/></svg>
<svg style="left:302px;top:567px" width="20" height="20" viewBox="0 0 20 20"><rect x="0.5" y="0.5" width="19" height="19" rx="2.200" fill="#fff" stroke="#7a97c4"/><rect x="7" y="2.500" width="11" height="15" fill="#fdfdfe" stroke="#c3c9d2" stroke-width="1"/><rect x="3" y="2" width="3.500" height="16" rx="1" fill="#dc8c52"/><rect x="5" y="2" width="1.500" height="16" fill="#c9652c"/><path d="M2.500 3.500h3M2.500 5.500h3M2.500 7.500h3M2.500 9.500h3M2.500 11.500h3M2.500 13.500h3M2.500 15.500h3" stroke="#f6e9e0" stroke-width="1"/><rect x="8.500" y="6" width="6" height="3" fill="#6f97e0"/><rect x="8.500" y="10" width="6" height="1" fill="#6f97e0"/><path d="M11 17.500l6.500-6.500v6.500z" fill="#eceef2"/><path d="M11 17.500l6.500-6.500" stroke="#c9cdd4" stroke-width="1"/></svg>
<div style="left:209px;top:652px;width:174px;height:20px;background:#ffdab9;border-radius:3px;"></div>
<svg style="left:215.5px;top:660px" width="9" height="5" viewBox="0 0 9 5"><path d="M0 0.300h8.500l-4.250 4.300z" fill="#a3b2c8"/></svg>
<svg style="left:233px;top:654px" width="16" height="16" viewBox="0 0 16 16"><path d="M0.500 3v-2.500h2.500M13 0.500h2.500v2.500M0.500 12v2.500h2.500M15.500 12v2.500h-2.500" fill="none" stroke="#3560ae" stroke-width="1" opacity=".85"/><rect x="6.500" y="2.500" width="7" height="7" rx="0.800" fill="#e9eef6" stroke="#8a8f98" stroke-width="1"/><rect x="3.500" y="6.500" width="7" height="6.500" rx="0.800" fill="#9cc4f3" stroke="#3a6cc0" stroke-width="1"/></svg>
<div style="left:394px;top:565px;width:185px;height:126px;border:1px solid #afc3e0;border-radius:4px 4px 3px 3px;background:#fff;"></div>
<div style="left:394px;top:565px;width:185px;height:23px;background:#b0c4de;border-radius:4px 4px 0 0;"></div>
<svg style="left:401.5px;top:574.5px" width="9" height="5" viewBox="0 0 9 5"><path d="M0 4.500l4.250-4.300 4.250 4.300z" fill="#8fa3c4"/></svg>
<svg style="left:527px;top:567px" width="20" height="20" viewBox="0 0 20 20"><rect x="0.5" y="0.5" width="19" height="19" rx="2.200" fill="#fff" stroke="#7a97c4"/><rect x="7" y="2.500" width="11" height="15" fill="#fdfdfe" stroke="#c3c9d2" stroke-width="1"/><rect x="3" y="2" width="3.500" height="16" rx="1" fill="#dc8c52"/><rect x="5" y="2" width="1.500" height="16" fill="#c9652c"/><path d="M2.500 3.500h3M2.500 5.500h3M2.500 7.500h3M2.500 9.500h3M2.500 11.500h3M2.500 13.500h3M2.500 15.500h3" stroke="#f6e9e0" stroke-width="1"/><rect x="8.500" y="6" width="6" height="3" fill="#6f97e0"/><rect x="8.500" y="10" width="6" height="1" fill="#6f97e0"/><path d="M11 17.500l6.500-6.500v6.500z" fill="#eceef2"/><path d="M11 17.500l6.500-6.500" stroke="#c9cdd4" stroke-width="1"/></svg>
<div style="left:399px;top:652px;width:175px;height:20px;background:#ffdab9;border-radius:3px;"></div>
<svg style="left:405.5px;top:660px" width="9" height="5" viewBox="0 0 9 5"><path d="M0 0.300h8.500l-4.250 4.300z" fill="#a3b2c8"/></svg>
<svg style="left:423px;top:654px" width="16" height="16" viewBox="0 0 16 16"><path d="M0.500 3v-2.500h2.500M13 0.500h2.500v2.500M0.500 12v2.500h2.500M15.500 12v2.500h-2.500" fill="none" stroke="#3560ae" stroke-width="1" opacity=".85"/><rect x="6.500" y="2.500" width="7" height="7" rx="0.800" fill="#e9eef6" stroke="#8a8f98" stroke-width="1"/><rect x="3.500" y="6.500" width="7" height="6.500" rx="0.800" fill="#9cc4f3" stroke="#3a6cc0" stroke-width="1"/></svg>
<div style="left:585px;top:565px;width:257px;height:126px;border:1px solid #afc3e0;border-radius:4px 4px 3px 3px;background:#fff;"></div>
<div style="left:585px;top:565px;width:257px;height:23px;background:#b0c4de;border-radius:4px 4px 0 0;"></div>
<svg style="left:592.5px;top:574.5px" width="9" height="5" viewBox="0 0 9 5"><path d="M0 4.500l4.250-4.300 4.250 4.300z" fill="#8fa3c4"/></svg>
<svg style="left:669px;top:567px" width="20" height="20" viewBox="0 0 20 20"><rect x="0.5" y="0.5" width="19" height="19" rx="2.200" fill="#fff" stroke="#7a97c4"/><rect x="7" y="2.500" width="11" height="15" fill="#fdfdfe" stroke="#c3c9d2" stroke-width="1"/><rect x="3" y="2" width="3.500" height="16" rx="1" fill="#dc8c52"/><rect x="5" y="2" width="1.500" height="16" fill="#c9652c"/><path d="M2.500 3.500h3M2.500 5.500h3M2.500 7.500h3M2.500 9.500h3M2.500 11.500h3M2.500 13.500h3M2.500 15.500h3" stroke="#f6e9e0" stroke-width="1"/><rect x="8.500" y="6" width="6" height="3" fill="#6f97e0"/><rect x="8.500" y="10" width="6" height="1" fill="#6f97e0"/><path d="M11 17.500l6.500-6.500v6.500z" fill="#eceef2"/><path d="M11 17.500l6.500-6.500" stroke="#c9cdd4" stroke-width="1"/></svg>
<div style="left:848px;top:565px;width:242px;height:126px;border:1px solid #afc3e0;border-radius:4px 4px 3px 3px;background:#fff;"></div>
<div style="left:848px;top:565px;width:242px;height:23px;background:#b0c4de;border-radius:4px 4px 0 0;"></div>
<svg style="left:855.5px;top:574.5px" width="9" height="5" viewBox="0 0 9 5"><path d="M0 4.500l4.250-4.300 4.250 4.300z" fill="#8fa3c4"/></svg>
<svg style="left:979px;top:567px" width="20" height="20" viewBox="0 0 20 20"><rect x="0.5" y="0.5" width="19" height="19" rx="2.200" fill="#fff" stroke="#7a97c4"/><rect x="7" y="2.500" width="11" height="15" fill="#fdfdfe" stroke="#c3c9d2" stroke-width="1"/><rect x="3" y="2" width="3.500" height="16" rx="1" fill="#dc8c52"/><rect x="5" y="2" width="1.500" height="16" fill="#c9652c"/><path d="M2.500 3.500h3M2.500 5.500h3M2.500 7.500h3M2.500 9.500h3M2.500 11.500h3M2.500 13.500h3M2.500 15.500h3" stroke="#f6e9e0" stroke-width="1"/><rect x="8.500" y="6" width="6" height="3" fill="#6f97e0"/><rect x="8.500" y="10" width="6" height="1" fill="#6f97e0"/><path d="M11 17.500l6.500-6.500v6.500z" fill="#eceef2"/><path d="M11 17.500l6.500-6.500" stroke="#c9cdd4" stroke-width="1"/></svg>
<div style="left:5px;top:818px;width:1243px;height:25px;background:#e3edfb;"></div>
<div style="left:9px;top:820px;width:81px;height:23px;border:1px solid #9db6da;border-bottom:none;background:#d9e6f9;"></div>
<div style="left:16px;top:825px;width:11px;height:11px;border:1px solid #c9a02c;background:linear-gradient(160deg,#fff07a,#ffe44a 50%,#f5d330);border-radius:1px;"></div>
<svg style="left:17px;top:826px" width="9" height="9" viewBox="0 0 9 9"><path d="M1.500 3l3 3 3-3v2.500l-3 2.500-3-2.500z" fill="#fff6a0" opacity=".7"/></svg>
<div style="left:89px;top:820px;width:138px;height:23px;border:1px solid #9db6da;border-bottom:none;background:#d9e6f9;"></div>
<div style="left:96px;top:825px;width:11px;height:11px;border:1px solid #c9a02c;background:linear-gradient(160deg,#fff07a,#ffe44a 50%,#f5d330);border-radius:1px;"></div>
<svg style="left:97px;top:826px" width="9" height="9" viewBox="0 0 9 9"><path d="M1.500 3l3 3 3-3v2.500l-3 2.500-3-2.500z" fill="#fff6a0" opacity=".7"/></svg>
<div style="left:226px;top:820px;width:74px;height:23px;border:1px solid #9db6da;border-bottom:none;background:#d9e6f9;"></div>
<div style="left:233px;top:825px;width:11px;height:11px;border:1px solid #c9a02c;background:linear-gradient(160deg,#fff07a,#ffe44a 50%,#f5d330);border-radius:1px;"></div>
<svg style="left:234px;top:826px" width="9" height="9" viewBox="0 0 9 9"><path d="M1.500 3l3 3 3-3v2.500l-3 2.500-3-2.500z" fill="#fff6a0" opacity=".7"/></svg>
<div style="left:5px;top:842px;width:1243px;height:27px;background:linear-gradient(#dbe6f6 0,#d3e1f4 10px,#b8cdea 11px,#c3d5ef 100%);border-top:1px solid #5f7fb5;"></div>
<div style="left:46px;top:846px;width:1px;height:20px;background:#a9bfdf;"></div>
<div style="left:47px;top:846px;width:1px;height:20px;background:#eef4fc;"></div>
<div style="left:725px;top:843px;width:2px;height:25px;background:#f4f8fd;"></div>
<div style="left:727px;top:843px;width:521px;height:25px;background:linear-gradient(#b9d2f6 0,#a6c4f0 10px,#88aadc 11px,#7b9dd2 100%);border-left:1px solid #5f7fb5;"></div>
<div style="left:1217px;top:846px;width:1px;height:20px;background:#d6e4f8;"></div>
<svg style="left:733px;top:847px" width="16" height="18" viewBox="0 0 16 18"><path d="M8.700 8.500v-4a2.600 2.600 0 0 1 5.200-.3v3" fill="none" stroke="#aeb4bc" stroke-width="1.500"/><path d="M1.500 7l8.500-1.200v10.700l-8.500-1z" fill="#e2b53a" stroke="#a98718" stroke-width=".6"/><path d="M10 5.800l1.500.7v9.300l-1.500.7z" fill="#b8901e"/><path d="M4.500 8.800h4.500M4.500 10.800h4.500M4.500 12.800h4.500M4.500 14.600h4.500" stroke="#f8e7a4" stroke-width="1"/><path d="M2.300 7.500v8" stroke="#f4d566" stroke-width="1"/></svg>
<svg style="left:1235px;top:855px" width="12" height="12" viewBox="0 0 12 12"><rect x="8" y="0" width="2" height="2" fill="#4a6aa8"/><rect x="9" y="1" width="1.500" height="1.500" fill="#c9dbf5"/><rect x="4" y="4" width="2" height="2" fill="#4a6aa8"/><rect x="5" y="5" width="1.500" height="1.500" fill="#c9dbf5"/><rect x="8" y="4" width="2" height="2" fill="#4a6aa8"/><rect x="9" y="5" width="1.500" height="1.500" fill="#c9dbf5"/><rect x="0" y="8" width="2" height="2" fill="#4a6aa8"/><rect x="1" y="9" width="1.500" height="1.500" fill="#c9dbf5"/><rect x="4" y="8" width="2" height="2" fill="#4a6aa8"/><rect x="5" y="9" width="1.500" height="1.500" fill="#c9dbf5"/><rect x="8" y="8" width="2" height="2" fill="#4a6aa8"/><rect x="9" y="9" width="1.500" height="1.500" fill="#c9dbf5"/></svg>
<span style="left:29.0px;top:7.1px;letter-spacing:-0.574px;color:#7b8ba6;font-size:13px;">Stock Portfolio Organizer (Beta) - v1.0.6295.30107</span>
<span style="left:48.5px;top:60.0px;letter-spacing:-0.619px;color:#111;font-size:12.5px;">File</span>
<span style="left:95.0px;top:60.5px;letter-spacing:0.261px;color:#15428b;">Main</span>
<span style="left:156.0px;top:60.5px;letter-spacing:-0.186px;color:#15428b;">Data</span>
<span style="left:212.5px;top:60.5px;letter-spacing:-0.154px;color:#15428b;">Advanced</span>
<span style="left:297.0px;top:60.5px;letter-spacing:0.038px;color:#15428b;">Help</span>
<span style="left:1210.0px;top:56.5px;letter-spacing:1.200px;color:#fff;font-weight:700;font-size:14px;font-family:'Liberation Serif',serif;">i</span>
<span style="left:1232.3px;top:57.9px;letter-spacing:0.047px;color:#bfe3fb;font-weight:700;font-size:13px;">?</span>
<span style="left:14.1px;top:152.2px;letter-spacing:-0.260px;color:#3e6aaa;">Preferences</span>
<span style="left:86.0px;top:152.2px;letter-spacing:-0.134px;color:#3e6aaa;">Currency Conversion</span>
<span style="left:217.0px;top:152.2px;letter-spacing:0.197px;color:#3e6aaa;">Adjustment</span>
<span style="left:445.5px;top:152.2px;letter-spacing:0.126px;color:#3e6aaa;">Portfolio Management</span>
<span style="left:22.6px;top:120.5px;letter-spacing:0.063px;color:#15428b;">Settings</span>
<span style="left:116.8px;top:120.5px;letter-spacing:-0.055px;color:#15428b;">Currency</span>
<span style="left:111.1px;top:134.5px;letter-spacing:-0.100px;color:#15428b;">Conversion</span>
<span style="left:212.1px;top:120.5px;letter-spacing:-0.087px;color:#15428b;">Ticker</span>
<span style="left:207.3px;top:134.5px;letter-spacing:-0.149px;color:#15428b;">Change</span>
<span style="left:256.1px;top:120.5px;letter-spacing:-0.054px;color:#15428b;">Stock</span>
<span style="left:259.1px;top:134.5px;letter-spacing:0.114px;color:#15428b;">Split</span>
<span style="left:302.6px;top:120.5px;letter-spacing:-0.089px;color:#15428b;">Enter Trust</span>
<span style="left:300.1px;top:134.5px;letter-spacing:0.252px;color:#15428b;">Distribution</span>
<span style="left:379.1px;top:120.5px;letter-spacing:-0.222px;color:#15428b;">Enter</span>
<span style="left:369.1px;top:134.5px;letter-spacing:0.157px;color:#15428b;">Dividend</span>
<span style="left:426.1px;top:120.5px;letter-spacing:-0.222px;color:#15428b;">Enter</span>
<span style="left:424.6px;top:134.5px;letter-spacing:-0.027px;color:#15428b;">Trade</span>
<span style="left:463.6px;top:120.5px;letter-spacing:-0.222px;color:#15428b;">Close</span>
<span style="left:463.1px;top:134.5px;letter-spacing:-0.027px;color:#15428b;">Trade</span>
<span style="left:501.1px;top:120.5px;letter-spacing:0.309px;color:#15428b;">Watch</span>
<span style="left:507.1px;top:134.5px;letter-spacing:-0.472px;color:#15428b;">Lists</span>
<span style="left:546.1px;top:120.5px;letter-spacing:-0.027px;color:#15428b;">Trade</span>
<span style="left:542.1px;top:134.5px;letter-spacing:-0.112px;color:#15428b;">Groups</span>
<span style="left:587.6px;top:120.5px;letter-spacing:-0.079px;color:#15428b;">Trade Group</span>
<span style="left:602.1px;top:134.5px;letter-spacing:0.088px;color:#15428b;">Unions</span>
<span style="left:660.9px;top:120.5px;letter-spacing:-0.008px;color:#15428b;">Accounts</span>
<span style="left:21.1px;top:180.0px;letter-spacing:-0.107px;color:#111;">Summary</span>
<span style="left:1243.8px;top:180.2px;transform:rotate(90deg);transform-origin:0 0;letter-spacing:0.006px;color:#7286a8;">Main Navigation Panel</span>
<span style="left:32.0px;top:202.5px;letter-spacing:-0.325px;color:#111;">Messages: 0</span>
<span style="left:125.0px;top:202.5px;letter-spacing:0.009px;color:#111;">Trade Filtering Options</span>
<span style="left:260.0px;top:202.5px;letter-spacing:0.089px;color:#111;">Filtering Options</span>
<span style="left:362.0px;top:202.5px;letter-spacing:-0.372px;color:#111;">Refresh</span>
<span style="left:22.0px;top:227.5px;letter-spacing:-0.156px;color:#111;">Data Stream</span>
<span style="left:97.0px;top:227.5px;letter-spacing:-0.175px;color:#111;">End of Day</span>
<span style="left:201.0px;top:227.5px;letter-spacing:-0.070px;color:#111;">Show All:</span>
<span style="left:277.0px;top:227.5px;letter-spacing:-0.386px;color:#9aa3b0;">From:</span>
<span style="left:319.0px;top:227.5px;letter-spacing:-0.208px;color:#a9adb3;">Sunday, 27 March 2016 4:43:59 PM</span>
<span style="left:533.0px;top:227.5px;letter-spacing:-0.108px;color:#9aa3b0;">To:</span>
<span style="left:560.0px;top:227.5px;letter-spacing:-0.111px;color:#a9adb3;">Monday, 27 March 2017 4:43:59 PM</span>
<span style="left:778.0px;top:227.5px;letter-spacing:-0.156px;color:#111;">Trade Status Filter Type</span>
<span style="left:911.2px;top:227.5px;letter-spacing:0.128px;color:#111;">All</span>
<span style="left:41.0px;top:255.0px;letter-spacing:0.073px;color:#111;">Account</span>
<span style="left:18.4px;top:280.0px;letter-spacing:0.371px;color:#000;font-weight:700;">Name</span>
<span style="left:160.9px;top:280.0px;letter-spacing:-0.369px;color:#111;">CommSec</span>
<span style="left:18.4px;top:298.0px;letter-spacing:-0.378px;color:#000;font-weight:700;">Status</span>
<span style="left:173.2px;top:298.0px;letter-spacing:-0.020px;color:#111;">Open</span>
<span style="left:18.4px;top:316.0px;letter-spacing:-0.412px;color:#000;font-weight:700;">Currency</span>
<span style="left:126.7px;top:316.0px;letter-spacing:-0.049px;color:#111;">Australian Dollar [AUD]</span>
<span style="left:62.8px;top:342.0px;letter-spacing:-0.183px;color:#000;font-weight:700;">Transaction Summary</span>
<span style="left:22.3px;top:364.0px;letter-spacing:-0.102px;color:#000;font-weight:700;">Total Transactions</span>
<span style="left:184.3px;top:364.0px;letter-spacing:-0.888px;color:#111;">5</span>
<span style="left:22.3px;top:382.0px;letter-spacing:0.093px;color:#000;font-weight:700;">Total Debits</span>
<span style="left:156.8px;top:382.0px;letter-spacing:-0.226px;color:#ff0000;">-$53,318.02</span>
<span style="left:22.3px;top:400.0px;letter-spacing:-0.013px;color:#000;font-weight:700;">Total Credits</span>
<span style="left:173.8px;top:400.0px;letter-spacing:-0.483px;color:#0000ff;">$0.00</span>
<span style="left:22.3px;top:418.0px;letter-spacing:-0.372px;color:#000;font-weight:700;">Balance</span>
<span style="left:159.6px;top:418.0px;letter-spacing:-0.396px;color:#228b22;">$96,681.98</span>
<span style="left:47.5px;top:438.0px;letter-spacing:-0.156px;color:#000;font-weight:700;">Transactions Grouped by Category</span>
<span style="left:23.0px;top:457.0px;letter-spacing:-0.121px;color:#000;font-weight:700;">Trades</span>
<span style="left:159.6px;top:457.0px;letter-spacing:-0.396px;color:#228b22;">$96,681.98</span>
<span style="left:289.0px;top:255.0px;letter-spacing:0.073px;color:#111;">Account</span>
<span style="left:266.5px;top:280.0px;letter-spacing:0.371px;color:#000;font-weight:700;">Name</span>
<span style="left:318.6px;top:280.0px;letter-spacing:-0.030px;color:#111;">CommSec International</span>
<span style="left:266.5px;top:298.0px;letter-spacing:-0.378px;color:#000;font-weight:700;">Status</span>
<span style="left:366.4px;top:298.0px;letter-spacing:-0.020px;color:#111;">Open</span>
<span style="left:266.5px;top:316.0px;letter-spacing:-0.413px;color:#000;font-weight:700;">Currency</span>
<span style="left:339.6px;top:316.0px;letter-spacing:-0.206px;color:#111;">US Dollar [USD]</span>
<span style="left:310.8px;top:342.0px;letter-spacing:-0.183px;color:#000;font-weight:700;">Transaction Summary</span>
<span style="left:481.5px;top:255.0px;letter-spacing:0.073px;color:#111;">Account</span>
<span style="left:458.3px;top:280.0px;letter-spacing:0.371px;color:#000;font-weight:700;">Name</span>
<span style="left:510.9px;top:280.0px;letter-spacing:-0.089px;color:#111;">Interactive Brokers (Australia)</span>
<span style="left:458.3px;top:298.0px;letter-spacing:-0.378px;color:#000;font-weight:700;">Status</span>
<span style="left:574.1px;top:298.0px;letter-spacing:-0.020px;color:#111;">Open</span>
<span style="left:458.3px;top:316.0px;letter-spacing:-0.413px;color:#000;font-weight:700;">Currency</span>
<span style="left:527.6px;top:316.0px;letter-spacing:-0.049px;color:#111;">Australian Dollar [AUD]</span>
<span style="left:502.7px;top:342.0px;letter-spacing:-0.144px;color:#000;font-weight:700;">Transaction Summary</span>
<span style="left:703.8px;top:255.0px;letter-spacing:-0.129px;color:#111;">All Trades</span>
<span style="left:725.4px;top:288.0px;letter-spacing:-0.117px;color:#000;font-weight:700;">Profit/Loss</span>
<span style="left:685.3px;top:310.0px;letter-spacing:-0.010px;color:#000;font-weight:700;">Annualized Total Profit/Loss (%)</span>
<span style="left:881.6px;top:310.0px;letter-spacing:-0.432px;color:#228b22;">1.22 %</span>
<span style="left:685.3px;top:328.0px;letter-spacing:0.051px;color:#000;font-weight:700;">Total Profit/Loss ($)</span>
<span style="left:874.0px;top:328.0px;letter-spacing:-0.361px;color:#228b22;">$8,062.59</span>
<span style="left:685.3px;top:346.0px;letter-spacing:0.051px;color:#000;font-weight:700;">Total Profit/Loss (%)</span>
<span style="left:881.6px;top:346.0px;letter-spacing:-0.432px;color:#228b22;">9.32 %</span>
<span style="left:685.3px;top:364.0px;letter-spacing:0.215px;color:#000;font-weight:700;">Total Profit</span>
<span style="left:870.9px;top:364.0px;letter-spacing:-0.264px;color:#228b22;">$11,628.76</span>
<span style="left:685.3px;top:382.0px;letter-spacing:-0.258px;color:#000;font-weight:700;">Total Loss</span>
<span style="left:874.0px;top:382.0px;letter-spacing:-0.361px;color:#228b22;">$8,062.59</span>
<span style="left:729.6px;top:402.0px;letter-spacing:-0.103px;color:#000;font-weight:700;">Profit/Loss Averages</span>
<span style="left:729.6px;top:424.0px;letter-spacing:-0.131px;color:#000;font-weight:700;">Profit/Loss By Group</span>
<span style="left:725.3px;top:450.0px;letter-spacing:-0.081px;color:#000;font-weight:700;">Trade Counts</span>
<span style="left:725.3px;top:472.0px;letter-spacing:0.031px;color:#000;font-weight:700;">Trade Durations</span>
<span style="left:725.3px;top:493.0px;letter-spacing:-0.276px;color:#000;font-weight:700;">Trade Expenses</span>
<span style="left:725.3px;top:515.0px;letter-spacing:0.067px;color:#000;font-weight:700;">Top 10 Best/Worst Trades</span>
<span style="left:725.3px;top:537.0px;letter-spacing:-0.119px;color:#000;font-weight:700;">Asset Allocation</span>
<span style="left:970.2px;top:255.0px;letter-spacing:-0.189px;color:#111;">Trade Group</span>
<span style="left:947.2px;top:280.0px;letter-spacing:0.371px;color:#000;font-weight:700;">Name</span>
<span style="left:1032.8px;top:280.0px;letter-spacing:0.143px;color:#111;">AU Mining</span>
<span style="left:947.2px;top:298.0px;letter-spacing:-0.378px;color:#000;font-weight:700;">Status</span>
<span style="left:1046.3px;top:298.0px;letter-spacing:-0.020px;color:#111;">Open</span>
<span style="left:947.2px;top:316.0px;letter-spacing:-0.413px;color:#000;font-weight:700;">Currency</span>
<span style="left:1000.1px;top:316.0px;letter-spacing:-0.049px;color:#111;">Australian Dollar [AUD]</span>
<span style="left:991.5px;top:342.0px;letter-spacing:-0.104px;color:#000;font-weight:700;">Trade Summary</span>
<span style="left:41.2px;top:568.0px;letter-spacing:-0.179px;color:#111;">Trade Group</span>
<span style="left:18.2px;top:593.0px;letter-spacing:0.371px;color:#000;font-weight:700;">Name</span>
<span style="left:105.5px;top:593.0px;letter-spacing:-0.113px;color:#111;">AU Health</span>
<span style="left:18.2px;top:611.0px;letter-spacing:-0.378px;color:#000;font-weight:700;">Status</span>
<span style="left:117.8px;top:611.0px;letter-spacing:-0.020px;color:#111;">Open</span>
<span style="left:18.2px;top:629.0px;letter-spacing:-0.413px;color:#000;font-weight:700;">Currency</span>
<span style="left:71.3px;top:629.0px;letter-spacing:-0.049px;color:#111;">Australian Dollar [AUD]</span>
<span style="left:62.6px;top:655.0px;letter-spacing:-0.104px;color:#000;font-weight:700;">Trade Summary</span>
<span style="left:232.2px;top:568.0px;letter-spacing:-0.179px;color:#111;">Trade Group</span>
<span style="left:209.2px;top:593.0px;letter-spacing:0.371px;color:#000;font-weight:700;">Name</span>
<span style="left:302.1px;top:593.0px;letter-spacing:-0.390px;color:#111;">US Tech</span>
<span style="left:209.2px;top:611.0px;letter-spacing:-0.378px;color:#000;font-weight:700;">Status</span>
<span style="left:308.8px;top:611.0px;letter-spacing:-0.020px;color:#111;">Open</span>
<span style="left:209.2px;top:629.0px;letter-spacing:-0.413px;color:#000;font-weight:700;">Currency</span>
<span style="left:262.3px;top:629.0px;letter-spacing:-0.049px;color:#111;">Australian Dollar [AUD]</span>
<span style="left:253.6px;top:655.0px;letter-spacing:-0.104px;color:#000;font-weight:700;">Trade Summary</span>
<span style="left:422.2px;top:568.0px;letter-spacing:-0.049px;color:#111;">Trade Group Union</span>
<span style="left:399.2px;top:593.0px;letter-spacing:0.371px;color:#000;font-weight:700;">Name</span>
<span style="left:502.6px;top:593.0px;letter-spacing:-1.108px;color:#111;">ASX</span>
<span style="left:399.2px;top:611.0px;letter-spacing:-0.378px;color:#000;font-weight:700;">Status</span>
<span style="left:498.8px;top:611.0px;letter-spacing:-0.020px;color:#111;">Open</span>
<span style="left:399.2px;top:629.0px;letter-spacing:-0.413px;color:#000;font-weight:700;">Currency</span>
<span style="left:452.3px;top:629.0px;letter-spacing:-0.049px;color:#111;">Australian Dollar [AUD]</span>
<span style="left:443.6px;top:655.0px;letter-spacing:-0.104px;color:#000;font-weight:700;">Trade Summary</span>
<span style="left:613.4px;top:568.0px;letter-spacing:-0.050px;color:#111;">Dividends</span>
<span style="left:590.4px;top:593.0px;letter-spacing:-0.047px;color:#000;font-weight:700;">Avg Percent Return on Investment</span>
<span style="left:788.6px;top:593.0px;letter-spacing:-0.274px;color:#228b22;">435.50 %</span>
<span style="left:590.4px;top:611.0px;letter-spacing:0.279px;color:#000;font-weight:700;">Total Net ($)</span>
<span style="left:792.0px;top:611.0px;letter-spacing:-0.232px;color:#228b22;">$660.00</span>
<span style="left:590.4px;top:629.0px;letter-spacing:0.045px;color:#000;font-weight:700;">Total Payed Out</span>
<span style="left:798.5px;top:629.0px;letter-spacing:-0.233px;color:#0000ff;">$0.00</span>
<span style="left:590.4px;top:647.0px;letter-spacing:-0.089px;color:#000;font-weight:700;">Total Reinvested</span>
<span style="left:787.6px;top:647.0px;letter-spacing:-0.336px;color:#228b22;">$3,000.00</span>
<span style="left:590.4px;top:665.0px;letter-spacing:-0.046px;color:#000;font-weight:700;">Total Reinvested Profit/Loss ($)</span>
<span style="left:793.1px;top:665.0px;letter-spacing:-0.167px;color:#ff0000;">-$19.95</span>
<span style="left:876.7px;top:568.0px;letter-spacing:0.082px;color:#111;">Trust-Distributions</span>
<span style="left:853.7px;top:593.0px;letter-spacing:-0.047px;color:#000;font-weight:700;">Avg Percent Return on Investment</span>
<span style="left:1051.1px;top:593.0px;letter-spacing:-0.452px;color:#0000ff;">0.00 %</span>
<span style="left:853.7px;top:611.0px;letter-spacing:0.119px;color:#000;font-weight:700;">Total Net Distribution</span>
<span style="left:1054.5px;top:611.0px;letter-spacing:-0.408px;color:#0000ff;">$0.00</span>
<span style="left:853.7px;top:629.0px;letter-spacing:0.045px;color:#000;font-weight:700;">Total Payed Out</span>
<span style="left:1054.5px;top:629.0px;letter-spacing:-0.408px;color:#0000ff;">$0.00</span>
<span style="left:853.7px;top:647.0px;letter-spacing:-0.089px;color:#000;font-weight:700;">Total Reinvested</span>
<span style="left:1054.5px;top:647.0px;letter-spacing:-0.408px;color:#0000ff;">$0.00</span>
<span style="left:853.7px;top:665.0px;letter-spacing:-0.046px;color:#000;font-weight:700;">Total Reinvested Profit/Loss ($)</span>
<span style="left:1054.5px;top:665.0px;letter-spacing:-0.408px;color:#0000ff;">$0.00</span>
<span style="left:33.5px;top:824.3px;letter-spacing:-0.386px;color:#6b82ab;">Messages</span>
<span style="left:113.3px;top:824.3px;letter-spacing:-0.298px;color:#6b82ab;">Data Feed Messages</span>
<span style="left:250.0px;top:824.3px;letter-spacing:-0.236px;color:#6b82ab;">Task List</span>
<span style="left:11.5px;top:848.3px;letter-spacing:-0.472px;color:#1c3a8c;">Ready</span>
<span style="left:751.7px;top:848.3px;letter-spacing:-0.159px;color:#1c3a8c;">Professional license installed. Licensed to John Doe. Expiry date: 16/05/2017 3:28:37 PM</span>
</body></html>
